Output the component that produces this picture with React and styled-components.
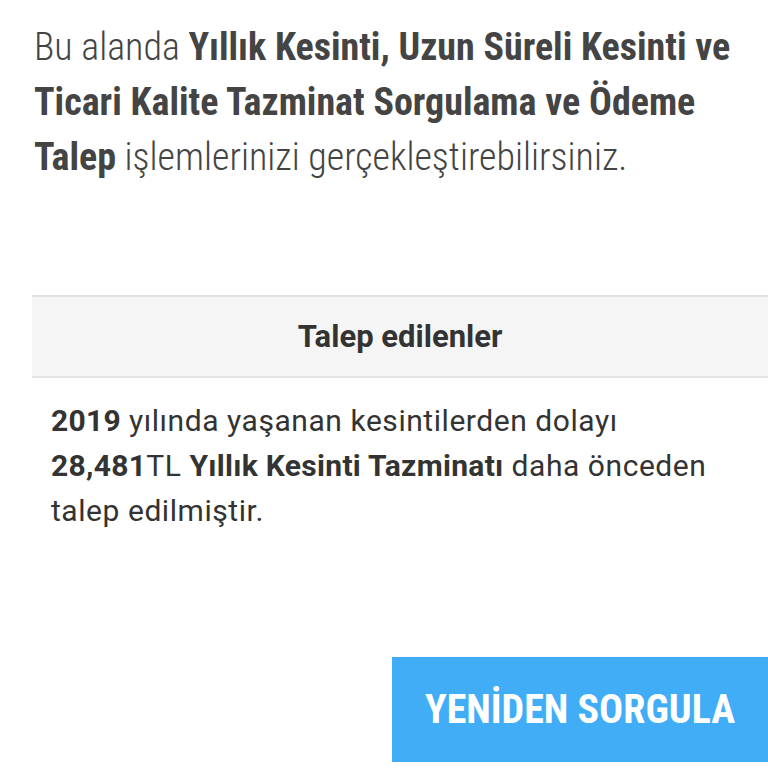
import React from 'react'
import styled, { createGlobalStyle } from 'styled-components'

const Global = createGlobalStyle`
  body {
    margin: 0;
    background: #fff;
    font-family: Roboto, "Liberation Sans", sans-serif;
    overflow: hidden;
  }
`

const Page = styled.div`
  width: 768px;
  height: 768px;
  overflow: hidden;
  display: flex;
  flex-direction: column;
`

const Intro = styled.p`
  margin: 0;
  padding: 20px 20px 0 34px;
  font-size: 38px;
  line-height: 55px;
  font-weight: 300;
  font-stretch: 87.5%;
  color: #444;

  b {
    font-weight: 700;
  }
`

const Table = styled.div`
  margin: 110px 0 0 32px;
`

const Header = styled.div`
  height: 79px;
  background: #f5f5f5;
  border-top: 2px solid #e3e3e3;
  border-bottom: 2px solid #e3e3e3;
  display: flex;
  align-items: center;
  justify-content: center;
  font-size: 31px;
  font-weight: 700;
  color: #333;
`

const Body = styled.div`
  padding: 20px 20px 0 19px;
  font-size: 30px;
  line-height: 45px;
  letter-spacing: 0.55px;
  color: #333;

  b {
    font-weight: 700;
    letter-spacing: 0.3px;
  }
`

const Actions = styled.div`
  margin-top: 124px;
  display: flex;
  justify-content: flex-end;
`

const Button = styled.button`
  width: 376px;
  height: 105px;
  border: none;
  background: #42adf7;
  color: #fff;
  font-family: Roboto, "Liberation Sans", sans-serif;
  font-size: 40px;
  font-weight: 700;
  font-stretch: 87.5%;
  padding: 0;
  cursor: pointer;
`

export default function App() {
  return (
    <Page>
      <Global />
      <Intro>
        Bu alanda <b>Yıllık Kesinti, Uzun Süreli Kesinti ve Ticari Kalite Tazminat Sorgulama ve Ödeme Talep</b>{' '}
        işlemlerinizi gerçekleştirebilirsiniz.
      </Intro>
      <Table>
        <Header>Talep edilenler</Header>
        <Body>
          <b>2019</b> yılında yaşanan kesintilerden dolayı<br />
          <b>28,481</b>TL <b>Yıllık Kesinti Tazminatı</b> daha önceden talep edilmiştir.
        </Body>
      </Table>
      <Actions>
        <Button>YENİDEN SORGULA</Button>
      </Actions>
    </Page>
  )
}
